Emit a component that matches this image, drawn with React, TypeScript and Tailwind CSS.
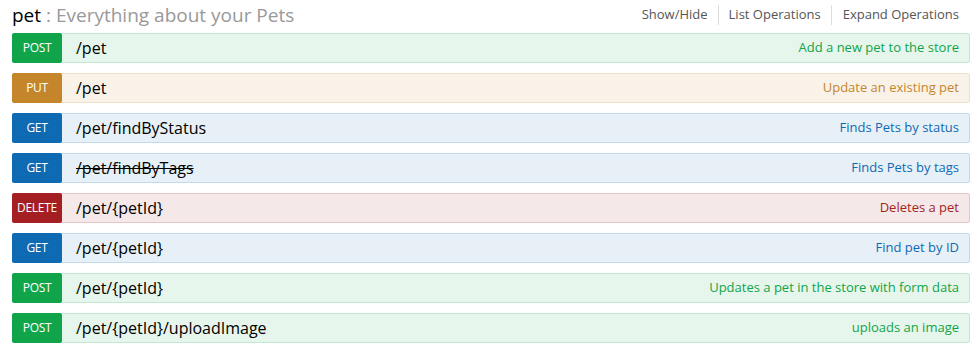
import React from "react";

type Method = "POST" | "PUT" | "GET" | "DELETE";

type Operation = {
  method: Method;
  path: string;
  summary: string;
  deprecated?: boolean;
};

const operations: Operation[] = [
  { method: "POST", path: "/pet", summary: "Add a new pet to the store" },
  { method: "PUT", path: "/pet", summary: "Update an existing pet" },
  { method: "GET", path: "/pet/findByStatus", summary: "Finds Pets by status" },
  { method: "GET", path: "/pet/findByTags", summary: "Finds Pets by tags", deprecated: true },
  { method: "DELETE", path: "/pet/{petId}", summary: "Deletes a pet" },
  { method: "GET", path: "/pet/{petId}", summary: "Find pet by ID" },
  { method: "POST", path: "/pet/{petId}", summary: "Updates a pet in the store with form data" },
  { method: "POST", path: "/pet/{petId}/uploadImage", summary: "uploads an image" },
];

const styles: Record<Method, { row: string; badge: string; text: string }> = {
  POST: {
    row: "bg-[#e7f6ec] border-[#c3e8d1]",
    badge: "bg-[#10a54a]",
    text: "text-[#10a54a]",
  },
  PUT: {
    row: "bg-[#f9f2e9] border-[#f0e0ca]",
    badge: "bg-[#c5862b]",
    text: "text-[#c5862b]",
  },
  GET: {
    row: "bg-[#e7f0f7] border-[#c3d9ec]",
    badge: "bg-[#0f6ab4]",
    text: "text-[#0f6ab4]",
  },
  DELETE: {
    row: "bg-[#f5e8e8] border-[#e8c6c7]",
    badge: "bg-[#a41e22]",
    text: "text-[#a41e22]",
  },
};

function OperationRow({ op }: { op: Operation }) {
  const s = styles[op.method];
  return (
    <div className={`flex items-stretch h-[30px] border rounded-[2px] ${s.row}`}>
      <span
        className={`w-[50px] -my-px -ml-px shrink-0 flex items-center justify-center rounded-[2px] text-white text-[12px] font-medium tracking-tight ${s.badge}`}
      >
        {op.method}
      </span>
      <span
        className={`pl-[14px] flex items-center text-[16px] text-black ${op.deprecated ? "line-through" : ""}`}
      >
        {op.path}
      </span>
      <span className={`ml-auto pr-[10px] flex items-center text-[13px] ${s.text}`}>{op.summary}</span>
    </div>
  );
}

export default function App() {
  return (
    <div
      className="w-[974px] h-[346px] bg-white px-[12px] pr-[4px] overflow-hidden"
      style={{ fontFamily: '"Open Sans", "DejaVu Sans", sans-serif' }}
    >
      {/* Header */}
      <div className="flex items-center justify-between h-[30px]">
        <h2 className="text-[19px] text-black">
          pet <span className="text-[#999]">: Everything about your Pets</span>
        </h2>
        <ul className="flex items-center text-[13px] text-[#555] pr-[11px]">
          <li className="pr-[10px] border-r border-[#ddd]">Show/Hide</li>
          <li className="px-[10px] border-r border-[#ddd]">List Operations</li>
          <li className="pl-[11px]">Expand Operations</li>
        </ul>
      </div>

      {/* Operations */}
      <div className="flex flex-col gap-[10px] pt-[3px]">
        {operations.map((op, idx) => (
          <OperationRow key={idx} op={op} />
        ))}
      </div>
    </div>
  );
}
